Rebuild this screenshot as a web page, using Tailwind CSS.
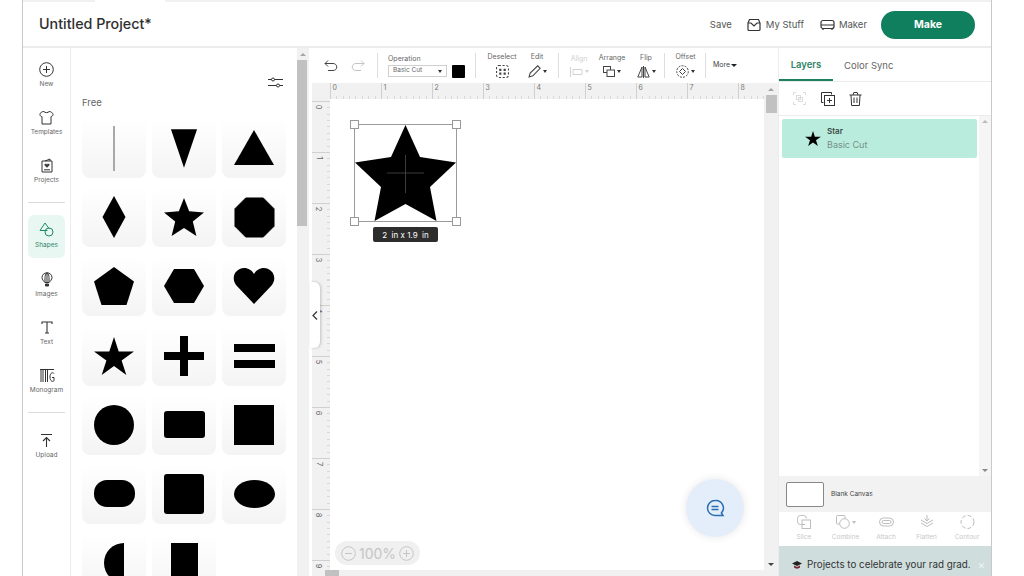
<!DOCTYPE html>
<html lang="en">
  <head>
    <meta charset="UTF-8" />
    <title>Untitled Project</title>
    <script src="https://cdn.jsdelivr.net/npm/@tailwindcss/browser@4"></script>
  </head>
  <body class="bg-white overflow-hidden font-['Inter',sans-serif] text-[#4a4a4a]">
    <div class="w-[1024px] h-[576px] overflow-hidden pl-[22px] pr-[32px]">
      <div class="w-[970px] h-[576px] border-x border-[#c9c9c9] flex flex-col overflow-hidden">
        <!-- top strip -->
        <div class="h-[2px] flex shrink-0">
          <div class="w-[72px] bg-[#f1f1f1]"></div>
          <div class="w-[70px]"></div>
          <div class="flex-1 bg-[#f1f1f1]"></div>
        </div>
        <!-- header -->
        <header class="h-[46px] shrink-0 flex items-center border-b-2 border-[#ececec] pt-[2px] pl-[16px]">
          <h1 class="text-[14.300px] font-medium text-[#2f2f2f] pb-[2px]">Untitled Project*</h1>
          <div class="ml-auto flex items-center text-[9.500px] text-[#555]">
            <span>Save</span>
            <svg class="ml-[15px] w-[14px] h-[14px]" viewBox="0 0 14 14" fill="none" stroke="#333" stroke-width="1.2"><path d="M1 5l1.500-3.500h9L13 5v6.500a1 1 0 0 1-1 1H2a1 1 0 0 1-1-1z"/><path d="M1 5h3l3 3 3-3h3"/></svg>
            <span class="ml-[5px]">My Stuff</span>
            <svg class="ml-[16px] w-[15px] h-[12px]" viewBox="0 0 15 12" fill="none" stroke="#333" stroke-width="1.2"><rect x="1" y="1.500" width="13" height="8" rx="2"/><path d="M1 6h13M3 9.500v1.500M12 9.500v1.500"/></svg>
            <span class="ml-[4px]">Maker</span>
            <button class="ml-[14px] mr-[16px] w-[94px] h-[28px] rounded-full bg-[#0f7f5d] text-white text-[10.500px] font-bold">Make</button>
          </div>
        </header>
        <div class="flex-1 flex min-h-0">
          <!-- left nav -->
          <nav class="relative w-[48px] shrink-0 border-r border-[#ececec] pt-[8px] flex flex-col items-center text-[6.500px] text-[#666]">
            <div class="absolute left-[-1px] top-[8px] w-[1px] h-[43px] bg-[#777]"></div>
            <a class="h-[48px] w-full flex flex-col items-center pt-[6px] gap-[3px]">
              <svg class="w-[15px] h-[15px]" viewBox="0 0 15 15" fill="none" stroke="#333" stroke-width="1"><circle cx="7.500" cy="7.500" r="6.800"/><path d="M7.500 4v7M4 7.500h7"/></svg>
              <span>New</span>
            </a>
            <a class="h-[48px] w-full flex flex-col items-center pt-[6px] gap-[3px]">
              <svg class="w-[15px] h-[15px]" viewBox="0 0 15 15" fill="none" stroke="#333" stroke-width="1"><path d="M5 1.500C3 1.500 1 2.500 1 4.500S2.500 6.500 3 6.500V14h9V6.500c.5 0 2-.5 2-2s-2-3-4-3C9.500 3 5.500 3 5 1.500z"/><path d="M5.500 6.500h.01M9.500 6.500h.01"/></svg>
              <span>Templates</span>
            </a>
            <a class="h-[48px] w-full flex flex-col items-center pt-[6px] gap-[3px]">
              <svg class="w-[14px] h-[15px]" viewBox="0 0 14 15" fill="none" stroke="#333" stroke-width="1"><path d="M2 3h10v11H2z"/><path d="M5 3l5-2v2"/><path d="M7 9.500L4.800 7.300c-.8-1.300 1.400-2 2.200-.8.800-1.200 3-.5 2.200.8z" fill="#333" stroke-width=".4"/><path d="M4 11.800h6"/></svg>
              <span>Projects</span>
            </a>
            <div class="mt-[2px] w-[37px] h-px bg-[#dcdcdc]"></div>
            <a class="mt-[12px] h-[43px] w-[37px] rounded-[6px] bg-[#e9f7f2] flex flex-col items-center pt-[7px] gap-[4px] text-[#2f8467]">
              <svg class="w-[15px] h-[15px]" viewBox="0 0 15 15" fill="none" stroke="#1f8a66" stroke-width="1"><path d="M6 1L1 8.500h7.500"/><path d="M6 1l4 5.500"/><circle cx="10" cy="10" r="4"/></svg>
              <span>Shapes</span>
            </a>
            <a class="mt-[8px] h-[48px] w-full flex flex-col items-center pt-[6px] gap-[3px]">
              <svg class="w-[12px] h-[15px]" viewBox="0 0 12 15" fill="none" stroke="#333" stroke-width="1"><path d="M6 .8C3 .8 1 3 1 5.500c0 2 1.500 3.500 3 5h4c1.500-1.500 3-3 3-5C11 3 9 .8 6 .8z"/><path d="M6 .8C4.500 2 4 4 4 5.500s0 3.500 0 5M6 .8c1.500 1.200 2 3.200 2 4.700s0 3.500 0 5M6 .8v9.700"/><path d="M4.500 12h3v2h-3z" fill="#333"/></svg>
              <span>Images</span>
            </a>
            <a class="h-[48px] w-full flex flex-col items-center pt-[6px] gap-[3px]">
              <svg class="w-[12px] h-[15px]" viewBox="0 0 12 15" fill="none" stroke="#333" stroke-width="1.100"><path d="M1 4V2h10v2M6 2v11M4 13h4"/></svg>
              <span>Text</span>
            </a>
            <a class="h-[48px] w-full flex flex-col items-center pt-[6px] gap-[3px]">
              <svg class="w-[16px] h-[15px]" viewBox="0 0 16 15" fill="none" stroke="#333" stroke-width="1"><path d="M1 1.500h14M2 1.500V14M4 1.500V14M6.500 1.500V14M8.500 1.500V14"/><path d="M15 5.500c-.8-1.200-4-1.500-4 3.500s3.500 5 4 3.500V9.500h-2"/></svg>
              <span>Monogram</span>
            </a>
            <div class="mt-[2px] w-[37px] h-px bg-[#dcdcdc]"></div>
            <a class="mt-[14px] h-[48px] w-full flex flex-col items-center pt-[6px] gap-[3px]">
              <svg class="w-[13px] h-[15px]" viewBox="0 0 13 15" fill="none" stroke="#333" stroke-width="1.100"><path d="M1 1.500h11M6.500 14V4.500M3 8l3.500-3.500L10 8"/></svg>
              <span>Upload</span>
            </a>
          </nav>
          <!-- shapes panel -->
          <section class="w-[226px] shrink-0 overflow-hidden pl-[11px]">
            <div class="h-[42px] pr-[14px] flex items-end justify-end">
              <svg class="w-[15px] h-[11px] mb-[2px]" viewBox="0 0 15 11" fill="none" stroke="#333" stroke-width="1"><path d="M0 2.500h3.500M6.500 2.500H15M0 8.500h8.500M11.500 8.500H15"/><circle cx="5" cy="2.500" r="1.500"/><circle cx="10" cy="8.500" r="1.500"/></svg>
            </div>
            <div class="mt-[6px] h-[22px] text-[9.500px] text-[#666]">Free</div>
            <div class="grid grid-cols-[64px_64px_64px] auto-rows-[60px] gap-x-[6px] gap-y-[9.200px]">
              <div class="rounded-[8px] bg-gradient-to-b from-white to-[#f4f4f4] flex items-center justify-center"><div class="w-[1.500px] h-[45px] bg-[#a9a9a9]"></div></div>
              <div class="rounded-[8px] bg-gradient-to-b from-white to-[#f4f4f4] flex items-center justify-center"><svg class="w-[28px] h-[41px]" viewBox="0 0 30 43"><path d="M1 1h28L15 42z"/></svg></div>
              <div class="rounded-[8px] bg-gradient-to-b from-white to-[#f4f4f4] flex items-center justify-center"><svg class="w-[42px] h-[36px]" viewBox="0 0 42 36"><path d="M21 0l20 35H1z"/></svg></div>
              <div class="rounded-[8px] bg-gradient-to-b from-white to-[#f4f4f4] flex items-center justify-center"><svg class="w-[24px] h-[42px]" viewBox="0 0 24 42"><path d="M12 0l11.500 21L12 42 .5 21z"/></svg></div>
              <div class="rounded-[8px] bg-gradient-to-b from-white to-[#f4f4f4] flex items-center justify-center"><svg class="w-[40px] h-[38px]" viewBox="0 0 100 95"><path d="M50 0l13 33 37 3-28 23 9 36-31-20-31 20 9-36L0 36l37-3z"/></svg></div>
              <div class="rounded-[8px] bg-gradient-to-b from-white to-[#f4f4f4] flex items-center justify-center"><svg class="w-[41px] h-[41px]" viewBox="0 0 42 42"><path d="M12 1h18l11 11v18L30 41H12L1 30V12z" stroke="#000" stroke-linejoin="round"/></svg></div>
              <div class="rounded-[8px] bg-gradient-to-b from-white to-[#f4f4f4] flex items-center justify-center"><svg class="w-[40px] h-[38px]" viewBox="0 0 40 38"><path d="M20 0l20 14.500L32.500 38h-25L0 14.500z"/></svg></div>
              <div class="rounded-[8px] bg-gradient-to-b from-white to-[#f4f4f4] flex items-center justify-center"><svg class="w-[40px] h-[34px]" viewBox="0 0 40 34"><path d="M10 0h20l10 17-10 17H10L0 17z"/></svg></div>
              <div class="rounded-[8px] bg-gradient-to-b from-white to-[#f4f4f4] flex items-center justify-center"><svg class="w-[42px] h-[36px]" viewBox="0 0 42 36"><path d="M21 36L3 17C-3 8 4 0 11 0c4.500 0 8 2.500 10 6 2-3.500 5.500-6 10-6 7 0 14 8 8 17z"/></svg></div>
              <div class="rounded-[8px] bg-gradient-to-b from-white to-[#f4f4f4] flex items-center justify-center"><svg class="w-[40px] h-[38px]" viewBox="0 0 40 38"><path d="M20 0l4.700 14.500H40l-12.400 9 4.700 14.500L20 29l-12.300 9 4.700-14.500L0 14.500h15.300z"/></svg></div>
              <div class="rounded-[8px] bg-gradient-to-b from-white to-[#f4f4f4] flex items-center justify-center"><svg class="w-[40px] h-[40px]" viewBox="0 0 40 40"><path d="M16 0h8v16h16v8H24v16h-8V24H0v-8h16z"/></svg></div>
              <div class="rounded-[8px] bg-gradient-to-b from-white to-[#f4f4f4] flex items-center justify-center"><svg class="w-[41px] h-[24px]" viewBox="0 0 41 24"><path d="M0 0h41v8H0zM0 16h41v8H0z"/></svg></div>
              <div class="rounded-[8px] bg-gradient-to-b from-white to-[#f4f4f4] flex items-center justify-center"><div class="w-[40px] h-[40px] rounded-full bg-black"></div></div>
              <div class="rounded-[8px] bg-gradient-to-b from-white to-[#f4f4f4] flex items-center justify-center"><div class="w-[41px] h-[27px] rounded-[3px] bg-black"></div></div>
              <div class="rounded-[8px] bg-gradient-to-b from-white to-[#f4f4f4] flex items-center justify-center"><div class="w-[40px] h-[40px] bg-black"></div></div>
              <div class="rounded-[8px] bg-gradient-to-b from-white to-[#f4f4f4] flex items-center justify-center"><div class="w-[41px] h-[27px] rounded-[13px] bg-black"></div></div>
              <div class="rounded-[8px] bg-gradient-to-b from-white to-[#f4f4f4] flex items-center justify-center"><div class="w-[40px] h-[40px] rounded-[3px] bg-black"></div></div>
              <div class="rounded-[8px] bg-gradient-to-b from-white to-[#f4f4f4] flex items-center justify-center"><div class="w-[41px] h-[28px] rounded-[50%] bg-black"></div></div>
              <div class="rounded-[8px] bg-gradient-to-b from-white to-[#f4f4f4] flex items-start justify-center pt-[10px]"><div class="w-[20px] h-[40px] rounded-l-[20px] bg-black"></div></div>
              <div class="rounded-[8px] bg-gradient-to-b from-white to-[#f4f4f4] flex items-start justify-center pt-[10px]"><div class="w-[27px] h-[40px] rounded-b-[8px] bg-black"></div></div>
            </div>
          </section>
          <!-- panel scrollbar -->
          <div class="w-[12px] shrink-0 bg-[#f1f1f1] flex flex-col">
            <div class="h-[12px] flex items-center justify-center"><div class="border-x-[3px] border-b-[3px] border-x-transparent border-b-[#a5a5a5]"></div></div>
            <div class="h-[166px] bg-[#c1c1c1] w-[10px]"></div>
          </div>
          <!-- workspace -->
          <main class="flex-1 min-w-0 flex flex-col">
            <!-- toolbar -->
            <div class="h-[35px] shrink-0 flex items-center pb-[1px] text-[7px] text-[#666]">
              <svg class="ml-[15px] w-[14px] h-[11px]" viewBox="0 0 14 11" fill="none" stroke="#444" stroke-width="1"><path d="M4 .5L1 3.500l3 3M1 3.500h8c5 0 5 7 0 7H4"/></svg>
              <svg class="ml-[13px] w-[14px] h-[11px]" viewBox="0 0 14 11" fill="none" stroke="#c4c4c4" stroke-width="1"><path d="M10 .5l3 3-3 3M13 3.500H5c-5 0-5 7 0 7h5"/></svg>
              <div class="ml-[12px] w-px h-[25px] bg-[#dedede]"></div>
              <div class="ml-[10px] flex flex-col gap-[1px]">
                <span class="leading-[11px]">Operation</span>
                <div class="flex items-center gap-[5px]">
                  <div class="w-[59px] h-[12px] border border-[#cfcfcf] flex items-center justify-between px-[4px] text-[6.500px]"><span>Basic Cut</span><span class="border-x-[2.500px] border-t-[3px] border-x-transparent border-t-[#333]"></span></div>
                  <div class="w-[13px] h-[13px] rounded-[1px] bg-black"></div>
                </div>
              </div>
              <div class="ml-[10px] w-px h-[25px] bg-[#dedede]"></div>
              <div class="ml-[11px] flex flex-col items-center gap-[3px] w-[30px]">
                <span class="leading-[10px]">Deselect</span>
                <svg class="w-[13px] h-[13px]" viewBox="0 0 12 12" fill="none" stroke="#444"><rect x=".5" y=".5" width="11" height="11" rx="2" stroke-dasharray="2 1.500"/><path d="M3 3.500h2v2H3zM7 3.500h2v2H7zM3 7h2v2H3zM7 7h2v2H7z" fill="#444" stroke="none"/></svg>
              </div>
              <div class="ml-[11px] w-[18px] flex flex-col items-center gap-[3px]">
                <span class="leading-[10px]">Edit</span>
                <div class="flex items-center gap-[2px]">
                  <svg class="w-[13px] h-[13px]" viewBox="0 0 12 12" fill="none" stroke="#444"><path d="M1 11l1-3.500L9 .8 11.200 3 4.500 10z"/></svg>
                  <span class="border-x-[2px] border-t-[3px] border-x-transparent border-t-[#333]"></span>
                </div>
              </div>
              <div class="ml-[12px] w-px h-[25px] bg-[#dedede]"></div>
              <div class="ml-[11px] w-[18px] flex flex-col items-center gap-[3px] text-[#cfcfcf]">
                <span class="leading-[10px]">Align</span>
                <div class="flex items-center gap-[2px]">
                  <svg class="w-[13px] h-[10px]" viewBox="0 0 13 10" fill="none" stroke="#d2d2d2"><path d="M.5 0v10M3 2.500h9v5H3z"/></svg>
                  <span class="border-x-[2px] border-t-[3px] border-x-transparent border-t-[#d2d2d2]"></span>
                </div>
              </div>
              <div class="ml-[10px] w-[28px] flex flex-col items-center gap-[3px]">
                <span class="leading-[10px]">Arrange</span>
                <div class="flex items-center gap-[2px]">
                  <svg class="w-[12px] h-[11px]" viewBox="0 0 12 11" fill="none" stroke="#444"><rect x=".5" y=".5" width="7" height="6"/><rect x="4" y="4" width="7.500" height="6.500" fill="#fff"/></svg>
                  <span class="border-x-[2px] border-t-[3px] border-x-transparent border-t-[#333]"></span>
                </div>
              </div>
              <div class="ml-[11px] w-[18px] flex flex-col items-center gap-[3px]">
                <span class="leading-[10px]">Flip</span>
                <div class="flex items-center gap-[2px]">
                  <svg class="w-[13px] h-[12px]" viewBox="0 0 13 12" fill="none" stroke="#444"><path d="M6.500 0v12M5 1L.8 11H5zM8 1l4.200 10H8z"/></svg>
                  <span class="border-x-[2px] border-t-[3px] border-x-transparent border-t-[#333]"></span>
                </div>
              </div>
              <div class="ml-[9px] w-px h-[25px] bg-[#dedede]"></div>
              <div class="ml-[10px] w-[21px] flex flex-col items-center gap-[3px]">
                <span class="leading-[10px]">Offset</span>
                <div class="flex items-center gap-[2px]">
                  <svg class="w-[13px] h-[13px]" viewBox="0 0 13 13" fill="none" stroke="#444"><path d="M6.500 3.500l3 3-3 3-3-3z"/><circle cx="6.500" cy="6.500" r="5.800" stroke-dasharray="2 1.200"/></svg>
                  <span class="border-x-[2px] border-t-[3px] border-x-transparent border-t-[#333]"></span>
                </div>
              </div>
              <div class="ml-[9px] w-px h-[25px] bg-[#dedede]"></div>
              <div class="ml-[7px] flex items-center gap-[1px] text-[#444]"><span>More</span><span class="border-x-[3px] border-t-[3px] border-x-transparent border-t-[#222]"></span></div>
            </div>
            <div class="flex-1 min-h-0 flex flex-col">
              <div class="flex-1 min-h-0 flex">
                <div class="flex-1 min-w-0 flex flex-col pl-[3px]">
                  <!-- top ruler -->
                  <div class="h-[16px] shrink-0 bg-[#f1f1f1] pl-[17.500px] text-[7px] text-[#777] overflow-hidden">
                    <div class="h-full flex w-[600px] bg-[repeating-linear-gradient(90deg,#d8d8d8_0,#d8d8d8_1px,transparent_1px,transparent_6.375px)] bg-[size:100%_3px] bg-bottom bg-no-repeat">
                      <div class="w-[51px] shrink-0 border-l border-[#d0d0d0] pl-[2px] leading-[10px]">0</div>
                      <div class="w-[51px] shrink-0 border-l border-[#d0d0d0] pl-[2px] leading-[10px]">1</div>
                      <div class="w-[51px] shrink-0 border-l border-[#d0d0d0] pl-[2px] leading-[10px]">2</div>
                      <div class="w-[51px] shrink-0 border-l border-[#d0d0d0] pl-[2px] leading-[10px]">3</div>
                      <div class="w-[51px] shrink-0 border-l border-[#d0d0d0] pl-[2px] leading-[10px]">4</div>
                      <div class="w-[51px] shrink-0 border-l border-[#d0d0d0] pl-[2px] leading-[10px]">5</div>
                      <div class="w-[51px] shrink-0 border-l border-[#d0d0d0] pl-[2px] leading-[10px]">6</div>
                      <div class="w-[51px] shrink-0 border-l border-[#d0d0d0] pl-[2px] leading-[10px]">7</div>
                      <div class="w-[51px] shrink-0 border-l border-[#d0d0d0] pl-[2px] leading-[10px]">8</div>
                    </div>
                  </div>
                  <div class="flex-1 min-h-0 flex">
                    <!-- left ruler -->
                    <div class="w-[17.500px] shrink-0 bg-[#f1f1f1] pt-[2px] text-[7.500px] text-[#666] overflow-hidden">
                      <div class="h-[520px] bg-[repeating-linear-gradient(180deg,#d8d8d8_0,#d8d8d8_1px,transparent_1px,transparent_6.375px)] bg-[size:3px_100%] bg-right bg-no-repeat">
                        <div class="h-[51px] border-t border-[#d0d0d0] flex justify-center pr-[4px] pt-[1px]"><span class="rotate-90 leading-[8px] h-[8px]">0</span></div>
                        <div class="h-[51px] border-t border-[#d0d0d0] flex justify-center pr-[4px] pt-[1px]"><span class="rotate-90 leading-[8px] h-[8px]">1</span></div>
                        <div class="h-[51px] border-t border-[#d0d0d0] flex justify-center pr-[4px] pt-[1px]"><span class="rotate-90 leading-[8px] h-[8px]">2</span></div>
                        <div class="h-[51px] border-t border-[#d0d0d0] flex justify-center pr-[4px] pt-[1px]"><span class="rotate-90 leading-[8px] h-[8px]">3</span></div>
                        <div class="h-[51px] border-t border-[#d0d0d0] flex justify-center pr-[4px] pt-[1px]"><span class="rotate-90 leading-[8px] h-[8px]">4</span></div>
                        <div class="h-[51px] border-t border-[#d0d0d0] flex justify-center pr-[4px] pt-[1px]"><span class="rotate-90 leading-[8px] h-[8px]">5</span></div>
                        <div class="h-[51px] border-t border-[#d0d0d0] flex justify-center pr-[4px] pt-[1px]"><span class="rotate-90 leading-[8px] h-[8px]">6</span></div>
                        <div class="h-[51px] border-t border-[#d0d0d0] flex justify-center pr-[4px] pt-[1px]"><span class="rotate-90 leading-[8px] h-[8px]">7</span></div>
                        <div class="h-[51px] border-t border-[#d0d0d0] flex justify-center pr-[4px] pt-[1px]"><span class="rotate-90 leading-[8px] h-[8px]">8</span></div>
                        <div class="h-[51px] border-t border-[#d0d0d0] flex justify-center pr-[4px] pt-[1px]"><span class="rotate-90 leading-[8px] h-[8px]">9</span></div>
                      </div>
                    </div>
                    <!-- canvas -->
                    <div class="relative flex-1 min-w-0 bg-white">
                      <div class="absolute left-[24.500px] top-[25px] w-[103px] h-[98px] border border-[#9a9a9a]">
                        <svg class="absolute left-0 top-0 w-full h-full" viewBox="0 0 101 96"><path d="M50.500 0L65 32l36 5.500-26 24.500 6.500 34-31-17L19.500 96 26 62 0 37.500 36 32z"/><path d="M50.500 30v38M32 48h37" stroke="#555" stroke-width=".7"/></svg>
                        <div class="absolute -left-[5px] -top-[5px] w-[9px] h-[9px] bg-white border border-[#999]"></div>
                        <div class="absolute -right-[5px] -top-[5px] w-[9px] h-[9px] bg-white border border-[#999]"></div>
                        <div class="absolute -left-[5px] -bottom-[5px] w-[9px] h-[9px] bg-white border border-[#999]"></div>
                        <div class="absolute -right-[5px] -bottom-[5px] w-[9px] h-[9px] bg-white border border-[#999]"></div>
                      </div>
                      <div class="absolute left-[43.500px] top-[128px] w-[65px] h-[15px] rounded-[2px] bg-[#2d2d2d] text-white text-[8px] flex items-center justify-center whitespace-pre">2  in x 1.9  in</div>
                      <div class="absolute left-[5.500px] top-[442px] w-[85px] h-[24px] rounded-full bg-[#f0f0f0] flex items-center justify-center gap-[3px] text-[#c5c5c5] text-[14px]">
                        <svg class="w-[15px] h-[15px]" viewBox="0 0 15 15" fill="none" stroke="#c5c5c5"><circle cx="7.500" cy="7.500" r="6.800"/><path d="M4 7.500h7"/></svg>
                        <span>100%</span>
                        <svg class="w-[15px] h-[15px]" viewBox="0 0 15 15" fill="none" stroke="#c5c5c5"><circle cx="7.500" cy="7.500" r="6.800"/><path d="M4 7.500h7M7.500 4v7"/></svg>
                      </div>
                      <button class="absolute left-[356.500px] top-[380px] w-[58px] h-[58px] rounded-full bg-[#e4eefb] shadow-[0_0_8px_rgba(0,0,0,0.1)] flex items-center justify-center">
                        <svg class="w-[19px] h-[19px]" viewBox="0 0 19 19" fill="none" stroke="#2a6db0" stroke-width="1.500"><path d="M9 1.500a7.500 7.500 0 1 0 0 15h8l-1.600-2.500A7.500 7.500 0 0 0 9 1.500z"/><path d="M5.500 7.500h7M5.500 10.500h7"/></svg>
                      </button>
                    </div>
                  </div>
                </div>
                <!-- canvas scrollbar -->
                <div class="w-[14px] shrink-0 bg-[#f1f1f1] flex flex-col items-center">
                  <div class="h-[12px] flex items-center"><div class="border-x-[3px] border-b-[3px] border-x-transparent border-b-[#a5a5a5]"></div></div>
                  <div class="h-[18px] w-[11px] bg-[#c1c1c1]"></div>
                  <div class="mt-auto h-[12px] flex items-center"><div class="border-x-[3px] border-t-[3px] border-x-transparent border-t-[#444]"></div></div>
                </div>
              </div>
              <!-- horizontal scrollbar -->
              <div class="h-[6px] shrink-0 bg-[#f1f1f1] ml-[3px] pl-[13px]"><div class="w-[14px] h-full bg-[#c1c1c1]"></div></div>
            </div>
          </main>
          <!-- right panel -->
          <aside class="w-[213px] shrink-0 border-l border-[#ececec] flex flex-col">
            <div class="h-[34px] shrink-0 flex border-b border-[#ececec] text-[9.500px]">
              <div class="w-[54px] h-[33px] pt-[4px] border-b-2 border-[#1d7f62] flex items-center justify-center font-semibold text-[#2f8467]">Layers</div>
              <div class="ml-[11px] pt-[3px] flex items-center text-[#666]">Color Sync</div>
            </div>
            <div class="h-[34px] shrink-0 flex items-center border-b border-[#ececec] pl-[14px] gap-[15px]">
              <svg class="w-[13px] h-[13px]" viewBox="0 0 13 13" fill="none" stroke="#dcdcdc"><path d="M.5 3V.5H3M10 .5h2.500V3M12.500 10v2.500H10M3 12.500H.5V10"/><rect x="3.500" y="3.500" width="4" height="4"/><rect x="5.500" y="5.500" width="4" height="4"/></svg>
              <svg class="w-[14px] h-[14px]" viewBox="0 0 14 14" fill="none" stroke="#333"><path d="M2.500 10.500H.5V.5h10v2"/><rect x="3.500" y="3.500" width="10" height="10"/><path d="M8.500 6v5M6 8.500h5"/></svg>
              <svg class="-ml-[1px] w-[13px] h-[14px]" viewBox="0 0 13 14" fill="none" stroke="#333"><path d="M.5 3h12M4 3l.8-2.500h3.400L9 3M2 3l.6 10.500h7.800L11 3M5 5.500v5.500M8 5.500v5.500"/></svg>
            </div>
            <div class="flex-1 min-h-0 flex pt-[3px] pl-[3px]">
              <div class="flex-1 min-w-0">
                <div class="w-[195px] h-[39px] rounded-[2px] bg-[#b9ecdc] flex items-center pl-[23px]">
                  <svg class="w-[16px] h-[15px]" viewBox="0 0 40 38"><path d="M20 0l4.700 14.500H40l-12.400 9 4.700 14.500L20 29l-12.300 9 4.700-14.500L0 14.500h15.300z"/></svg>
                  <div class="ml-[6px] flex flex-col gap-[3px]">
                    <span class="text-[8px] leading-[10px] font-semibold text-[#3d4a46]">Star</span>
                    <span class="text-[9px] leading-[12px] text-[#75908a]">Basic Cut</span>
                  </div>
                </div>
              </div>
              <div class="w-[12px] -mt-[3px] shrink-0 bg-[#f5f5f5] flex flex-col items-center justify-between py-[4px]">
                <div class="border-x-[3px] border-b-[3px] border-x-transparent border-b-[#bbb]"></div>
                <div class="border-x-[3px] border-t-[3px] border-x-transparent border-t-[#888]"></div>
              </div>
            </div>
            <div class="h-[36px] shrink-0 bg-[#f2f2f2] flex items-center pl-[7px] text-[6.500px] text-[#444]">
              <div class="w-[38px] h-[25px] bg-white border border-[#888] rounded-[2px]"></div>
              <span class="ml-[7px] pt-[1px]">Blank Canvas</span>
            </div>
            <div class="h-[34px] shrink-0 flex text-[6.500px] text-[#c9c9c9]">
              <div class="w-[50px] flex flex-col items-center pt-[3px] gap-[4px]">
                <svg class="w-[14px] h-[14px]" viewBox="0 0 14 14" fill="none" stroke="#bdbdbd"><path d="M8 9.500H3.500a3 3 0 0 1-3-3v-3a3 3 0 0 1 3-3h3a3 3 0 0 1 3 3"/><rect x="5" y="5" width="8.500" height="8.500"/></svg>
                <span class="leading-[9px]">Slice</span>
              </div>
              <div class="w-[33px] flex flex-col items-center pt-[3px] gap-[4px]">
                <div class="flex items-center gap-[2px]">
                  <svg class="w-[14px] h-[14px]" viewBox="0 0 14 14" fill="none" stroke="#bdbdbd"><rect x=".5" y=".5" width="8.500" height="8.500" rx="1"/><circle cx="8.500" cy="8.500" r="4.800" fill="#fff"/></svg>
                  <span class="border-x-[2.500px] border-t-[3px] border-x-transparent border-t-[#bdbdbd]"></span>
                </div>
                <span class="leading-[9px]">Combine</span>
              </div>
              <div class="w-[48px] flex flex-col items-center pt-[3px] gap-[4px]">
                <svg class="w-[15px] h-[14px]" viewBox="0 0 15 14" fill="none" stroke="#bdbdbd"><rect x=".5" y="3" width="14" height="8" rx="4"/><rect x="3" y="5.500" width="9" height="3" rx="1.500"/></svg>
                <span class="leading-[9px]">Attach</span>
              </div>
              <div class="w-[33px] flex flex-col items-center pt-[3px] gap-[4px]">
                <svg class="w-[14px] h-[14px]" viewBox="0 0 14 14" fill="none" stroke="#bdbdbd"><path d="M7 0v6M4.500 3.500L7 6l2.500-2.500M1 5l6 3.500L13 5M1 8l6 3.500L13 8"/></svg>
                <span class="leading-[9px]">Flatten</span>
              </div>
              <div class="w-[48px] flex flex-col items-center pt-[3px] gap-[4px]">
                <svg class="w-[15px] h-[14px]" viewBox="0 0 15 14" fill="none" stroke="#bdbdbd"><circle cx="7.500" cy="7" r="6.500" stroke-dasharray="4 2"/></svg>
                <span class="leading-[9px]">Contour</span>
              </div>
            </div>
            <div class="h-[30px] shrink-0 bg-[#cfdedd] flex items-center pt-[8px] pl-[13px] text-[9.800px] text-[#333]">
              <svg class="w-[10px] h-[8px] shrink-0" viewBox="0 0 10 8"><path d="M5 0l5 2.500L5 5 0 2.500z" fill="#222"/><path d="M2 4.500v2c1.500 1.500 4.500 1.500 6 0v-2L5 6z" fill="#7a2430"/></svg>
              <span class="ml-[5px] whitespace-nowrap">Projects to celebrate your rad grad.</span>
              <span class="ml-[7px] text-white text-[11px] opacity-70">×</span>
            </div>
          </aside>
        </div>
      </div>
    </div>
    <!-- collapse handle over the canvas edge -->
    <button class="absolute left-[310px] top-[282px] w-[10px] h-[66px] bg-white rounded-r-[6px] shadow-[1px_0_3px_rgba(0,0,0,0.2)] flex items-center justify-center">
      <svg class="w-[6px] h-[9px]" viewBox="0 0 6 9" fill="none" stroke="#333" stroke-width="1.200"><path d="M5 .5l-4 4 4 4"/></svg>
    </button>
  </body>
</html>
